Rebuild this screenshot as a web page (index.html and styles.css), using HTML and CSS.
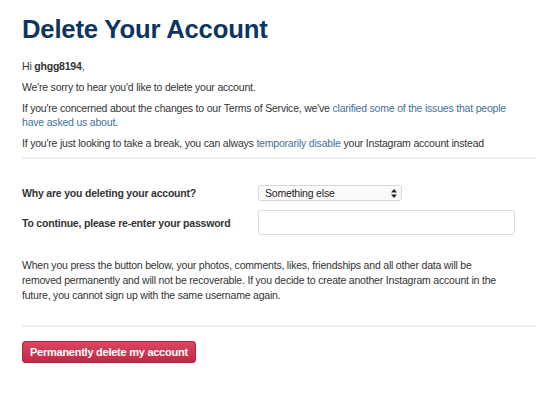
FILE: index.html
```html
<!DOCTYPE html>
<html lang="en">
<head>
	<meta charset="UTF-8">
	<title>Delete Your Account</title>
	<link rel="stylesheet" href="styles.css">
</head>
<body>
	<div class="page">
		<h1>Delete Your Account</h1>
		<p class="hi">Hi <strong>ghgg8194</strong>,</p>
		<p>We're sorry to hear you'd like to delete your account.</p>
		<p>If you're concerned about the changes to our Terms of Service, we've <a href="#">clarified some of the issues that people have asked us about</a>.</p>
		<p>If you're just looking to take a break, you can always <a href="#">temporarily disable</a> your Instagram account instead</p>
		<hr>
		<form class="delete-form">
			<div class="row">
				<label for="reason">Why are you deleting your account?</label>
				<div class="select">
					<span>Something else</span>
					<svg width="6" height="9" viewBox="0 0 6 9"><path d="M3 0L6 3.5H0Z M3 9L0 5.5H6Z" fill="#222"/></svg>
				</div>
			</div>
			<div class="row">
				<label for="password">To continue, please re-enter your password</label>
				<input type="password" id="password" class="password">
			</div>
			<p class="warning">When you press the button below, your photos, comments, likes, friendships and all other data will be removed permanently and will not be recoverable. If you decide to create another Instagram account in the future, you cannot sign up with the same username again.</p>
			<hr>
			<button type="button" class="delete-btn">Permanently delete my account</button>
		</form>
	</div>
</body>
</html>
```

FILE: styles.css
```css
*{
	margin: 0;
	padding: 0;
	box-sizing: border-box;
}
body{
	background: #fff;
	font-family: "Liberation Sans", Arial, sans-serif;
	font-size: 10.5px;
	letter-spacing: -0.2px;
	color: #333;
}
.page{
	padding: 14px 14px 0 22px;
}
h1{
	font-size: 25.7px;
	letter-spacing: -0.2px;
	font-weight: bold;
	color: #0d3563;
	line-height: 30px;
	margin-bottom: 15px;
}
p{
	max-width: 486px;
	line-height: 14px;
	margin-bottom: 7px;
}
a{
	color: #3f729b;
	text-decoration: none;
}
hr{
	border: 0;
	border-top: 2px solid #efefef;
	margin: 5px 0 0;
}
.delete-form{
	padding-top: 26px;
}
.row{
	display: flex;
	align-items: center;
	margin-bottom: 9px;
}
.row label{
	width: 236px;
	font-weight: bold;
}
.select{
	width: 144px;
	height: 16px;
	border: 1px solid #d6d6d6;
	border-radius: 3px;
	background: #fafafa;
	display: flex;
	align-items: center;
	justify-content: space-between;
	padding: 0 4px 0 6px;
	color: #222;
}
.password{
	width: 257px;
	height: 25px;
	border: 1px solid #dcdcdc;
	border-radius: 3px;
	background: #fff;
}
.warning{
	margin-top: 23px;
	line-height: 15px;
	margin-bottom: 22px;
}
.delete-btn{
	margin-top: 14px;
	height: 22px;
	padding: 0 7px;
	font-family: inherit;
	font-size: 11px;
	letter-spacing: -0.25px;
	font-weight: bold;
	color: #fff;
	border: 1px solid #b3243f;
	border-radius: 3px;
	background: linear-gradient(#dd4661, #c02846);
}
```
